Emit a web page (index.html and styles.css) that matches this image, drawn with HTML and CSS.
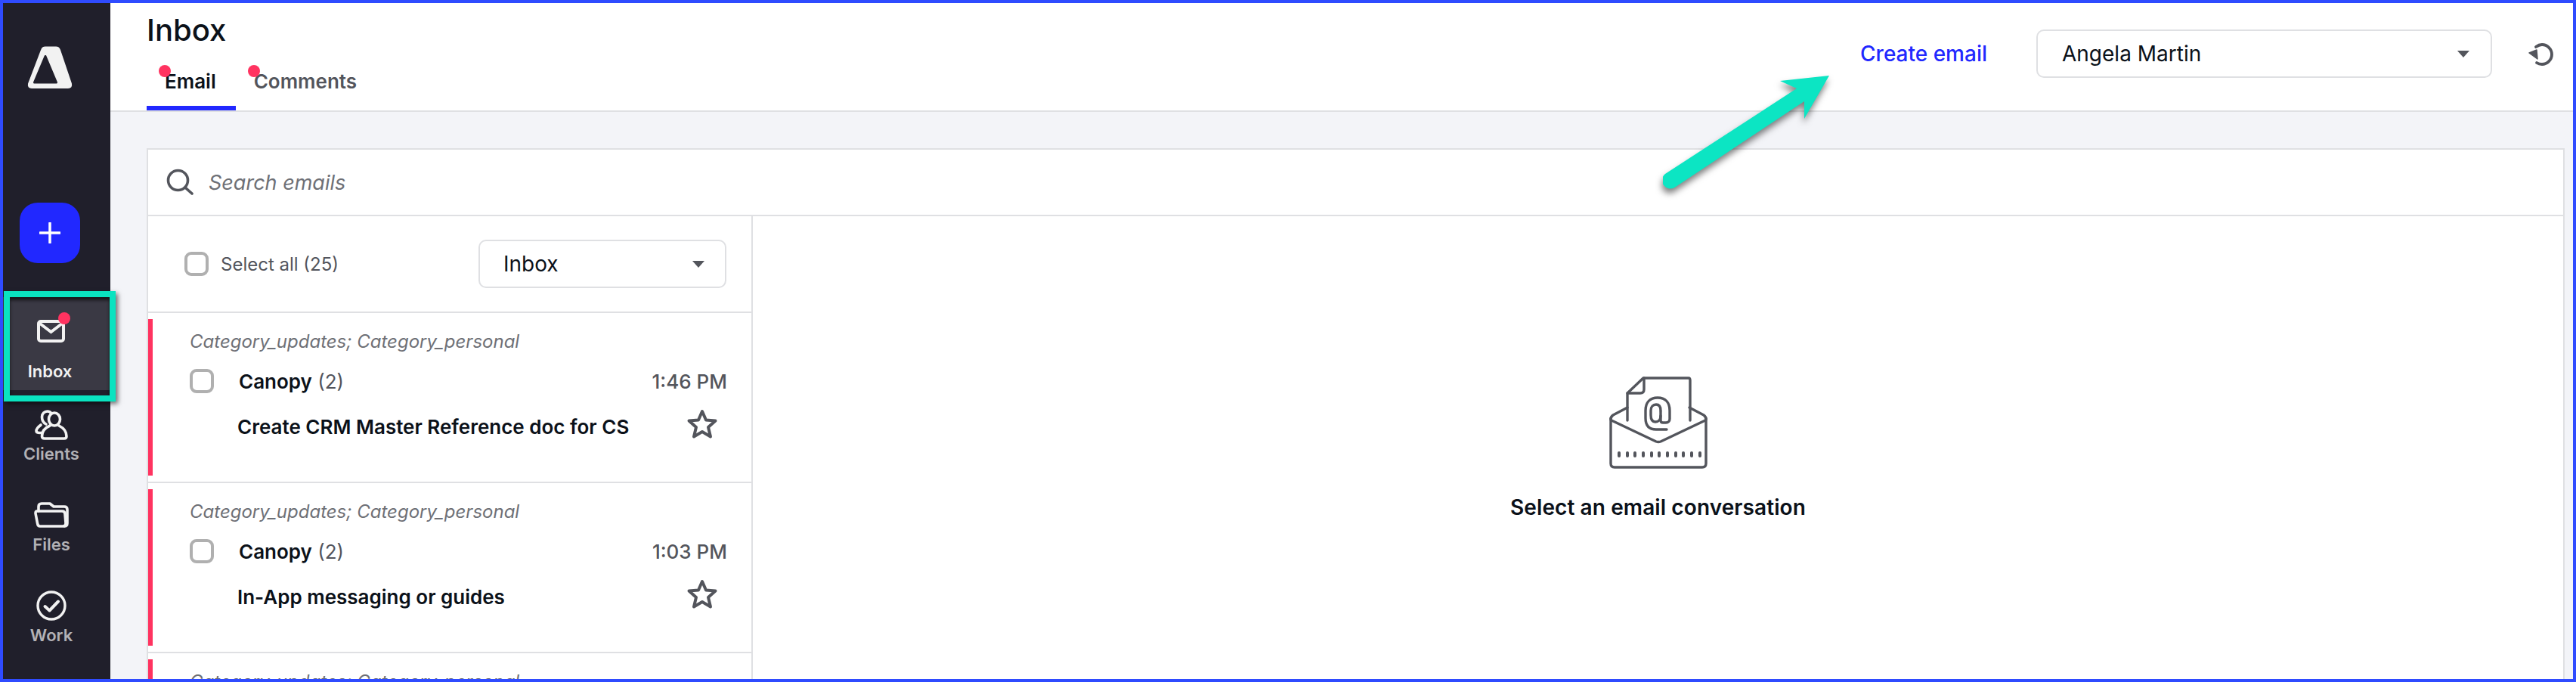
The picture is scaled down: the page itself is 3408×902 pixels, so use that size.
FILE: index.html
```html
<!DOCTYPE html>
<html lang="en">
<head>
<meta charset="utf-8">
<title>Inbox</title>
<link rel="stylesheet" href="styles.css">
</head>
<body>
<div class="frame">
  <aside class="sidebar">
    <svg class="logo" width="60" height="58" viewBox="0 0 60 58"><path d="M24 3.500H38Q41 3.500 42 6.500L57 51Q58 55 54 55H6Q2 55 3 51L20 6.500Q21 3.500 24 3.500Z" fill="#f2f2f2" stroke="#f2f2f2" stroke-width="4" stroke-linejoin="round"/><path d="M24 14.500L38.500 49H9.500Z" fill="#201f2b" stroke="#201f2b" stroke-width="3" stroke-linejoin="round"/></svg>
    <button class="add" aria-label="Add"><svg width="28" height="28" viewBox="0 0 28 28"><path d="M14 1V27M1 14H27" stroke="#fff" stroke-width="3.500" stroke-linecap="round"/></svg></button>
    <nav class="nav">
      <a class="nav-item active">
        <span class="nav-icon"><svg width="38" height="30" viewBox="0 0 38 30"><rect x="2" y="2" width="33" height="26" rx="3" fill="none" stroke="#f2f2f2" stroke-width="4"/><path d="M4 5L18.500 16L33 5" fill="none" stroke="#f2f2f2" stroke-width="4" stroke-linecap="round"/></svg><i class="dot nav-dot"></i></span>
        <span class="nav-label">Inbox</span>
      </a>
      <a class="nav-item clients">
        <span class="nav-icon"><svg width="44" height="40" viewBox="0 0 44 40"><g fill="none" stroke="#f2f2f2" stroke-width="3.600" stroke-linecap="round" stroke-linejoin="round"><path d="M15 19C11 17 9.500 13 9.500 9.500C9.500 5 13 2 16.500 2C19 2 21 3 22 5"/><path d="M8 20C4 23 2 26 2 28C2 29.500 4 30.500 7 30.500H9"/><ellipse cx="26" cy="12.500" rx="7.500" ry="8.500"/><path d="M20 21C13 24 9.500 29 9.500 35C9.500 37 11 38 13 38H39C41 38 42 37 42 35C42 29 38 24 32 21"/></g></svg></span>
        <span>Clients</span>
      </a>
      <a class="nav-item files">
        <span class="nav-icon"><svg width="46" height="34" viewBox="0 0 46 34"><g fill="none" stroke="#f2f2f2" stroke-width="3.600" stroke-linecap="round" stroke-linejoin="round"><path d="M6 12V6Q6 2 10 2H21L26 6H40Q44 6 44 10V28Q44 32 40 32"/><path d="M3.500 12H37Q41 12 41 16L42 28Q42 32 38 32H8Q5 32 4.500 28L2 15Q2 12 3.500 12Z"/></g></svg></span>
        <span>Files</span>
      </a>
      <a class="nav-item work">
        <span class="nav-icon"><svg width="40" height="40" viewBox="0 0 40 40"><circle cx="20" cy="20" r="18" fill="none" stroke="#f2f2f2" stroke-width="3.400"/><path d="M11.500 21L17.500 26.500L29 14.500" fill="none" stroke="#f2f2f2" stroke-width="4" stroke-linecap="round" stroke-linejoin="round"/></svg></span>
        <span>Work</span>
      </a>
    </nav>
  </aside>
  <main class="main">
    <header class="header">
      <div class="heading">
        <h1 class="title">Inbox</h1>
        <div class="tabs">
          <a class="tab active"><i class="dot tab-dot"></i>Email</a>
          <a class="tab"><i class="dot tab-dot"></i>Comments</a>
        </div>
      </div>
      <div class="actions">
        <a class="create">Create email</a>
        <div class="select user-select"><span>Angela Martin</span><i class="caret"></i></div>
        <svg class="refresh" width="34" height="30" viewBox="0 0 34 30"><g fill="none" stroke="#53555c" stroke-width="3.800" stroke-linecap="round"><path d="M11 5Q15 2 19 2C26 2 32 8 32 15C32 22 26 28 19 28Q15 28 12 26"/></g><path d="M2 13L12 9L13 21Z" fill="#53555c" stroke="#53555c" stroke-width="1.500" stroke-linejoin="round"/></svg>
      </div>
    </header>
    <section class="content">
      <div class="search">
        <svg width="36" height="36" viewBox="0 0 36 36"><circle cx="15.500" cy="15.500" r="13" fill="none" stroke="#53555c" stroke-width="3.600"/><path d="M25 25L34 33" stroke="#53555c" stroke-width="3.600" stroke-linecap="round"/></svg>
        <span>Search emails</span>
      </div>
      <div class="panes">
        <div class="list">
          <div class="list-head">
            <label class="select-all"><i class="check"></i><span>Select all (25)</span></label>
            <div class="select folder-select"><span>Inbox</span><i class="caret"></i></div>
          </div>
          <article class="row">
            <div class="row-body">
              <p class="cat">Category_updates; Category_personal</p>
              <div class="row-line"><i class="check"></i><span class="sender"><b>Canopy</b> (2)</span><time>1:46 PM</time></div>
              <div class="row-line subject-line"><span class="subject">Create CRM Master Reference doc for CS</span><svg class="star" width="42" height="40" viewBox="0 0 42 40"><path d="M21 3L26 14.500L38.500 15.500L29 24L32 36.500L21 30L10 36.500L13 24L3.500 15.500L16 14.500Z" fill="none" stroke="#53555c" stroke-width="4" stroke-linejoin="round"/></svg></div>
            </div>
          </article>
          <article class="row">
            <div class="row-body">
              <p class="cat">Category_updates; Category_personal</p>
              <div class="row-line"><i class="check"></i><span class="sender"><b>Canopy</b> (2)</span><time>1:03 PM</time></div>
              <div class="row-line subject-line"><span class="subject">In-App messaging or guides</span><svg class="star" width="42" height="40" viewBox="0 0 42 40"><path d="M21 3L26 14.500L38.500 15.500L29 24L32 36.500L21 30L10 36.500L13 24L3.500 15.500L16 14.500Z" fill="none" stroke="#53555c" stroke-width="4" stroke-linejoin="round"/></svg></div>
            </div>
          </article>
          <article class="row">
            <div class="row-body">
              <p class="cat">Category_updates; Category_personal</p>
            </div>
          </article>
        </div>
        <div class="detail">
          <svg width="130" height="122" viewBox="0 0 130 122"><g fill="none" stroke="#53555c" stroke-width="3.400" stroke-linecap="round" stroke-linejoin="round"><path d="M2 55V115Q2 120 7 120H123Q128 120 128 115V55"/><path d="M2 57Q2 53 5 51L24 41"/><path d="M128 57Q128 53 125 51L106 41"/><path d="M3 58L62 86Q65 87 68 86L127 58"/><path d="M24 58V22L45 2H105Q107 2 107 5V58"/><path d="M24 22H41Q46 22 46 17V2"/><path d="M76 70H62C53 70 48 65 48 55V45C48 34 54 28 64 28C74 28 80 34 80 45V56C80 59 78 61 75 61H71C69 61 68 60 68 58V46"/><path d="M68 52C68 57 65 60 61 60C57 60 55 57 55 51V45C55 40 58 37 62 37C66 37 68 40 68 45"/></g><g fill="#53555c"><rect x="11" y="99" width="4" height="8" rx="2"/><rect x="22" y="99" width="4" height="8" rx="2"/><rect x="32" y="99" width="4" height="8" rx="2"/><rect x="43" y="99" width="4" height="8" rx="2"/><rect x="54" y="99" width="4" height="8" rx="2"/><rect x="64" y="99" width="4" height="8" rx="2"/><rect x="75" y="99" width="4" height="8" rx="2"/><rect x="86" y="99" width="4" height="8" rx="2"/><rect x="96" y="99" width="4" height="8" rx="2"/><rect x="107" y="99" width="4" height="8" rx="2"/><rect x="118" y="99" width="4" height="8" rx="2"/></g></svg>
          <p class="empty">Select an email conversation</p>
        </div>
      </div>
    </section>
  </main>
  <div class="highlight"></div>
  <svg class="arrow" width="240" height="170" viewBox="0 0 240 170"><path d="M220 10L155 17L177 27L3 140A11 11 0 0 0 17 157L187 44L187 67Z" fill="#0ce5c3"/></svg>
</div>
</body>
</html>
```

FILE: styles.css
```css
* { box-sizing: border-box; }
html, body { margin: 0; height: 100%; }
body { font-family: Inter, "Liberation Sans", sans-serif; color: #0b1119; background: #fff; overflow: hidden; }
p, h1 { margin: 0; }
i { font-style: normal; }
.frame { position: relative; width: 3408px; height: 902px; border: 4px solid #2f4bff; display: flex; overflow: hidden; background: #f3f4f8; }

.sidebar { width: 142px; flex: none; background: #201f2b; display: flex; flex-direction: column; align-items: center; padding-top: 56px; }
.logo { margin-right: 18px; display: block; flex: none; }
.add { width: 80px; height: 80px; margin: 150px 18px 0 0; flex: none; border: 0; border-radius: 24px; background: #2128ff; display: flex; align-items: center; justify-content: center; padding: 0; }
.nav { width: 100%; margin-top: 45px; display: flex; flex-direction: column; }
.nav-item { display: flex; flex-direction: column; align-items: center; padding: 26px 14px 0 0; font-size: 22px; line-height: 26px; font-weight: 600; color: #b2b1b5; }
.nav-item.active { height: 123px; padding-top: 28px; background: #3a3944; color: #f2f2f2; }
.nav-item.clients { height: 122px; }
.nav-item.files { height: 117px; }
.nav-item.work { height: 120px; }
.nav-icon { position: relative; display: flex; justify-content: center; align-items: flex-end; height: 40px; margin-bottom: 5px; }
.active .nav-icon { height: 32px; margin-bottom: 25px; }
.active .nav-label { margin-right: 4px; }
.files .nav-icon { height: 34px; margin-bottom: 9px; }
.work .nav-icon { margin-bottom: 6px; }
.dot { position: absolute; width: 16px; height: 16px; border-radius: 50%; background: #ff3360; }
.nav-dot { right: -6px; top: -8px; }

.main { flex: 1; min-width: 0; display: flex; flex-direction: column; }
.header { height: 144px; flex: none; background: #fff; border-bottom: 2px solid #dfe0e3; display: flex; justify-content: space-between; padding-left: 48px; }
.heading { display: flex; flex-direction: column; justify-content: space-between; }
.title { font-size: 40px; line-height: 46px; font-weight: 500; margin-top: 13px; }
.tabs { display: flex; }
.tab { position: relative; height: 60px; padding: 0 24px 17px; display: flex; align-items: center; font-size: 26px; font-weight: 600; color: #53555c; }
.tab.active { color: #0b1119; border-bottom: 6px solid #2128ff; padding: 0 26px 12px 24px; }
.tab-dot { left: 16px; top: 0; }
.actions { display: flex; align-items: flex-start; padding-top: 35px; padding-right: 26px; }
.create { font-size: 28px; line-height: 64px; font-weight: 500; color: #2128ff; margin-right: 65px; }
.select { display: flex; align-items: center; justify-content: space-between; background: #fff; border: 2px solid #dfe0e3; border-radius: 10px; }
.user-select { width: 603px; height: 64px; padding: 0 28px 0 32px; font-size: 28px; }
.caret { width: 0; height: 0; border: 8px solid transparent; border-top: 9px solid #53555c; border-bottom: 0; }
.refresh { margin: 18px 0 0 47px; flex: none; }

.content { flex: 1; min-height: 0; display: flex; flex-direction: column; padding: 48px 11px 0 48px; }
.search { height: 90px; flex: none; display: flex; align-items: center; gap: 20px; padding-left: 24px; background: #fff; border: 2px solid #dfe0e3; font-size: 27px; font-style: italic; color: #6e7076; }
.panes { flex: 1; min-height: 0; display: flex; background: #fff; border: 2px solid #dfe0e3; border-bottom: 0; margin-top: -2px; }
.list { width: 800px; flex: none; border-right: 2px solid #dfe0e3; }
.list-head { height: 128px; border-bottom: 2px solid #dfe0e3; display: flex; align-items: center; justify-content: space-between; padding: 0 33px 0 48px; }
.select-all { display: flex; align-items: center; gap: 16px; font-size: 24px; color: #53555c; }
.check { display: block; width: 32px; height: 32px; flex: none; border: 4px solid #b0b0b0; border-radius: 9px; background: #fff; }
.folder-select { width: 328px; height: 64px; padding: 0 27px 0 31px; font-size: 28px; }
.row { height: 225px; padding: 8px 0; border-bottom: 2px solid #dfe0e3; }
.row-body { height: 207px; border-left: 6px solid #ff3360; padding: 16px 32px 0 49px; }
.cat { font-size: 24px; line-height: 28px; font-style: italic; color: #6e7076; white-space: nowrap; }
.row-line { display: flex; align-items: center; margin-top: 22px; height: 32px; font-size: 26px; }
.sender { margin-left: 33px; color: #53555c; flex: 1; }
.sender b { font-weight: 600; color: #0b1119; }
time { color: #53555c; font-weight: 500; }
.subject-line { margin-top: 28px; padding-left: 63px; justify-content: space-between; }
.subject { font-weight: 600; }
.star { flex: none; margin: -6px 12px 0 0; }
.detail { flex: 1; min-width: 0; display: flex; flex-direction: column; align-items: center; padding-top: 212px; }
.empty { font-size: 28px; font-weight: 600; margin-top: 34px; line-height: 34px; letter-spacing: .1px; }

.highlight { position: absolute; left: 1px; top: 381px; width: 148px; height: 146px; border: 8px solid #0ae3c0; box-shadow: 3px 3px 6px rgba(0,0,0,.55), inset 0 4px 4px rgba(0,0,0,.65); pointer-events: none; }
.arrow { position: absolute; left: 2196px; top: 86px; filter: drop-shadow(-1px 6px 4px rgba(0,0,0,.5)); pointer-events: none; }
```
